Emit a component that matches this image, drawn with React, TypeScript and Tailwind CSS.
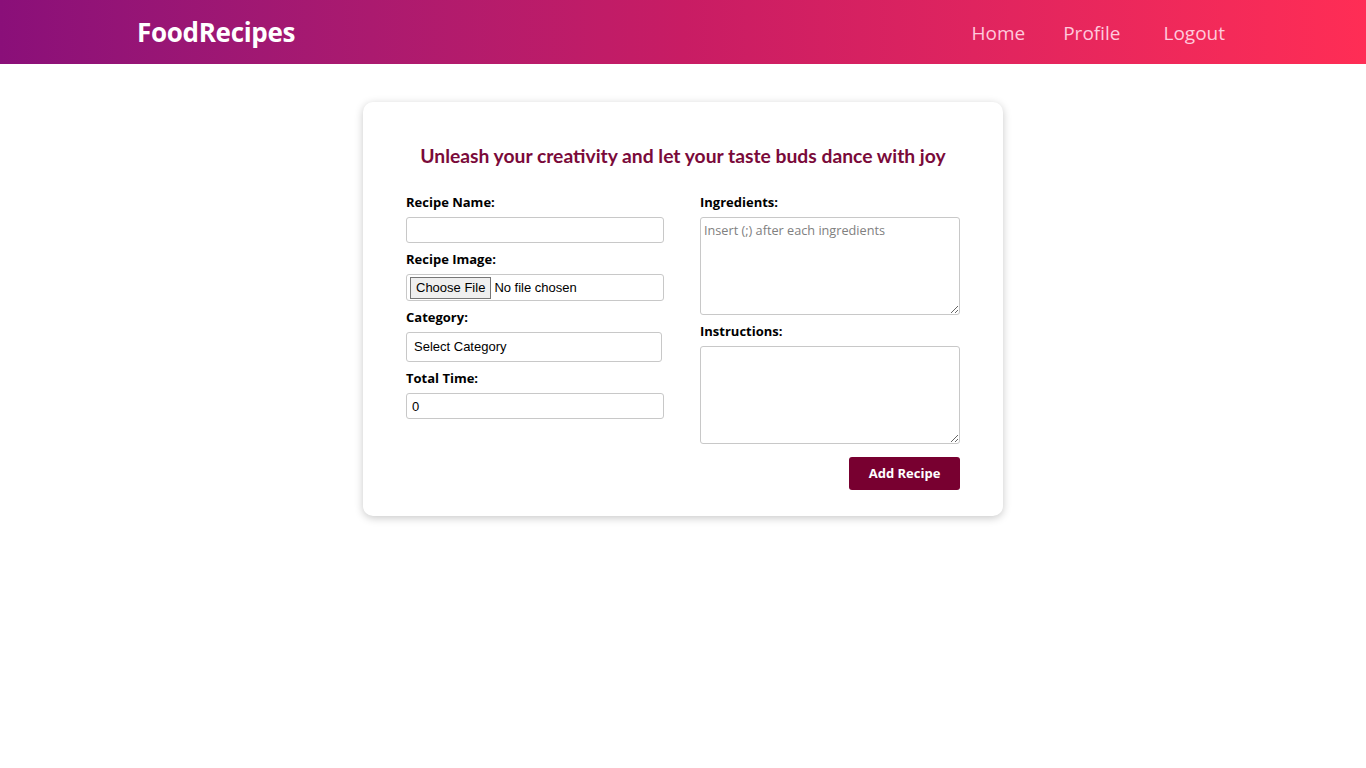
import { useState } from "react";

const label = "block text-[13px] font-bold leading-[18px] text-black";
const base =
  "block rounded-[3px] border border-[#c8c8c8] bg-white text-black outline-none";

export default function App() {
  const [time, setTime] = useState("0");

  return (
    <div className="min-h-screen bg-white font-['Open_Sans',sans-serif]">
      {/* Header */}
      <header className="flex h-16 items-center justify-between bg-gradient-to-r from-[#8a0f79] via-[#c81c64] to-[#ff2d55] pl-[137px] pr-[141px]">
        <h1 className="text-[26px] font-bold tracking-[-0.3px] text-white">FoodRecipes</h1>
        <nav className="mt-[2px] flex items-center text-[19px] text-[#ffc9dc]">
          <a className="mr-[38px]">Home</a>
          <a className="mr-[43px]">Profile</a>
          <a>Logout</a>
        </nav>
      </header>

      {/* Form card */}
      <div className="flex justify-center pt-[38px]">
        <form className="w-[640px] rounded-[10px] bg-white px-[43px] pb-[26px] pt-[43px] shadow-[0_2px_9px_rgba(0,0,0,0.22)]">
          <h2 className="text-center font-['Lato',sans-serif] text-[19.3px] font-bold leading-[22px] text-[#7a0a3a]">
            Unleash your creativity and let your taste buds dance with joy
          </h2>

          <div className="mt-[26px] grid grid-cols-[258px_260px] justify-between">
            {/* Left column */}
            <div className="flex flex-col">
              <label className={label}>Recipe Name:</label>
              <input type="text" className={`${base} mt-[6px] h-[26px] w-full px-[5px] text-[13px]`} />

              <label className={`${label} mt-[7px]`}>Recipe Image:</label>
              <input
                type="file"
                className={`${base} mt-[6px] h-[27px] w-full px-[3px] py-[2px] font-['Liberation_Sans',sans-serif] text-[13px] file:mr-[3px] file:border file:border-[#767676] file:bg-[#efefef] file:px-[5px] file:text-[13px] file:text-black`}
              />

              <label className={`${label} mt-[7px]`}>Category:</label>
              <select className={`${base} mt-[6px] h-[30px] w-[256px] appearance-none px-[7px] font-['Liberation_Sans',sans-serif] text-[13px]`}>
                <option>Select Category</option>
                <option>Breakfast</option>
                <option>Lunch</option>
                <option>Dinner</option>
                <option>Dessert</option>
              </select>

              <label className={`${label} mt-[7px]`}>Total Time:</label>
              <input
                type="number"
                value={time}
                onChange={(e) => setTime(e.target.value)}
                className={`${base} mt-[6px] h-[26px] w-full px-[5px] font-['Liberation_Sans',sans-serif] text-[13px]`}
              />
            </div>

            {/* Right column */}
            <div className="flex flex-col">
              <label className={label}>Ingredients:</label>
              <textarea
                placeholder="Insert (;) after each ingredients"
                className={`${base} mt-[6px] h-[98px] w-full px-[3px] py-[3px] text-[12.7px] placeholder:text-[#808080]`}
              />

              <label className={`${label} mt-[7px]`}>Instructions:</label>
              <textarea className={`${base} mt-[6px] h-[98px] w-full px-[5px] py-[3px] text-[13px]`} />

              <div className="mt-[13px] flex justify-end">
                <button
                  type="button"
                  className="h-[33px] w-[111px] rounded-[3px] bg-[#780030] text-[13px] font-bold text-white"
                >
                  Add Recipe
                </button>
              </div>
            </div>
          </div>
        </form>
      </div>
    </div>
  );
}
